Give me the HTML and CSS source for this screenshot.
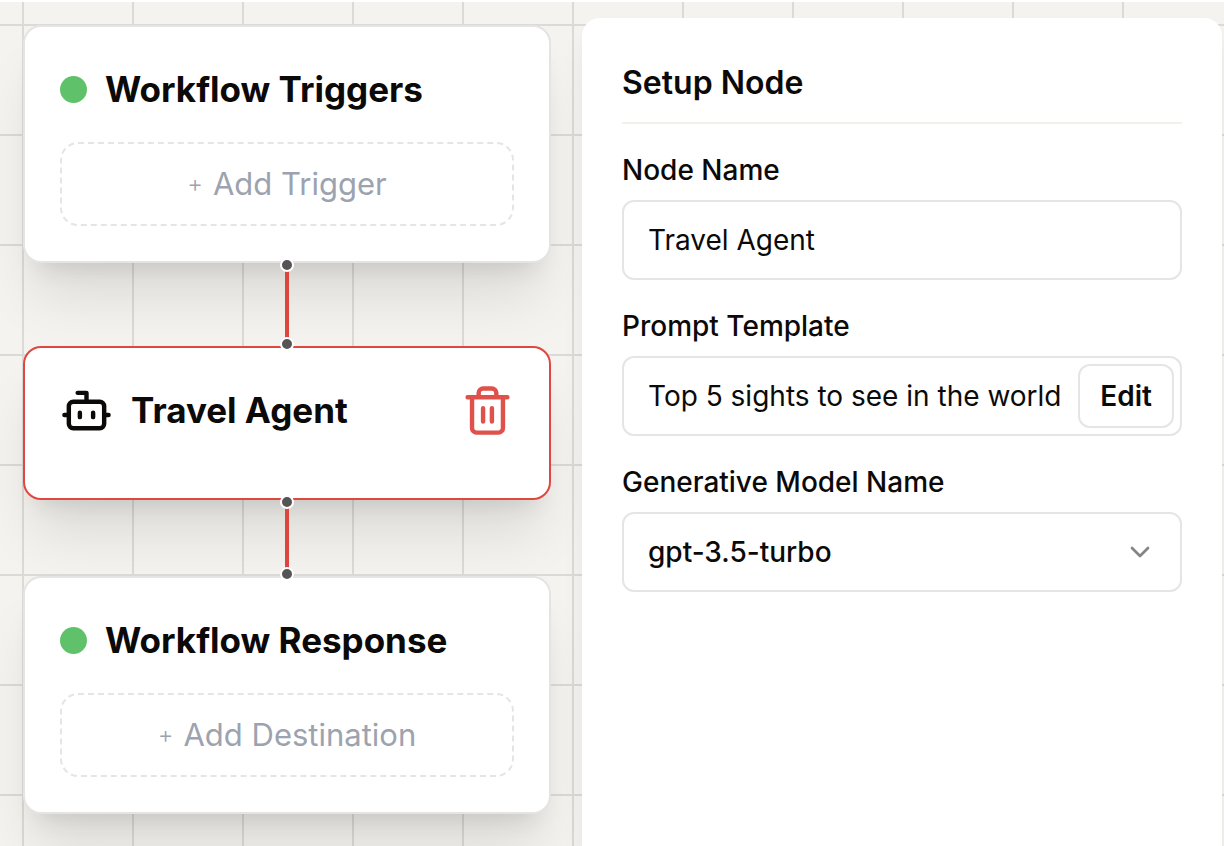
FILE: index.html
```
<!DOCTYPE html>
<html lang="en">
<head>
<meta charset="utf-8">
<title>Workflow editor</title>
<link rel="stylesheet" href="styles.css">
</head>
<body>
<main class="editor">
  <section class="flow" aria-label="Workflow">
    <article class="node">
      <h2 class="node-title"><span class="status"></span>Workflow Triggers</h2>
      <button class="add" type="button"><span class="plus">+</span>Add Trigger</button>
    </article>
    <div class="edge edge-long">
      <span class="handle handle-top"></span>
      <span class="handle handle-bottom"></span>
    </div>
    <article class="node node-selected">
      <div class="node-head">
        <h2 class="node-title">
          <svg class="icon" viewBox="0 0 24 24" aria-hidden="true"><path d="M12 8V4H8"/><rect x="4" y="8" width="16" height="12" rx="2"/><path d="M2 14h2M20 14h2M15 13v2M9 13v2"/></svg>
          Travel Agent
        </h2>
        <button class="delete" type="button" aria-label="Delete node">
          <svg class="icon" viewBox="0 0 24 24" aria-hidden="true"><path d="M3 6h18M19 6v14c0 1-1 2-2 2H7c-1 0-2-1-2-2V6M8 6V4c0-1 1-2 2-2h4c1 0 2 1 2 2v2M10 11v6M14 11v6"/></svg>
        </button>
      </div>
    </article>
    <div class="edge edge-short">
      <span class="handle handle-top"></span>
      <span class="handle handle-bottom"></span>
    </div>
    <article class="node">
      <h2 class="node-title"><span class="status"></span>Workflow Response</h2>
      <button class="add" type="button"><span class="plus">+</span>Add Destination</button>
    </article>
  </section>
  <aside class="panel">
    <h1 class="panel-title">Setup Node</h1>
    <form class="fields">
      <div class="field">
        <label for="name">Node Name</label>
        <input class="control" id="name" type="text" value="Travel Agent">
      </div>
      <div class="field">
        <label for="prompt">Prompt Template</label>
        <div class="control control-group">
          <input class="bare" id="prompt" type="text" value="Top 5 sights to see in the world">
          <button class="edit" type="button">Edit</button>
        </div>
      </div>
      <div class="field">
        <label for="model">Generative Model Name</label>
        <div class="control select-box">
          <select class="bare select" id="model"><option>gpt-3.5-turbo</option></select>
          <svg class="chevron" viewBox="0 0 24 24" aria-hidden="true"><path d="M6 9l6 6 6-6"/></svg>
        </div>
      </div>
    </form>
  </aside>
</main>
</body>
</html>
```
FILE: styles.css
```
* {
  box-sizing: border-box;
}

body {
  margin: 0;
  font-family: Inter, "Liberation Sans", sans-serif;
  color: #0c0a09;
}

h1,
h2 {
  margin: 0;
}

button,
input,
select {
  font: inherit;
  color: inherit;
}

.editor {
  display: flex;
  height: 100vh;
  overflow: hidden;
  border-top: 2px solid #fff;
  background-color: #f4f3ef;
  background-image:
    linear-gradient(#dcdad6 2px, transparent 2px),
    linear-gradient(90deg, #dcdad6 2px, transparent 2px);
  background-size: 110px 110px;
  background-position: 22px 22px;
}

.flow {
  flex: 0 0 582px;
  padding: 23px 31px 0 23px;
}

.node {
  padding: 35px;
  border: 2px solid #e5e4e2;
  border-radius: 18px;
  background: #fff;
  box-shadow:
    0 44px 55px -11px rgb(0 0 0 / 10%),
    0 18px 22px -13px rgb(0 0 0 / 10%);
}

.node-selected {
  padding-bottom: 60px;
  border-color: #de4841;
}

.node-head {
  display: flex;
  align-items: center;
  justify-content: space-between;
}

.node-title {
  display: flex;
  align-items: center;
  gap: 18px;
  font-size: 35px;
  line-height: 55px;
  font-weight: 700;
}

.status {
  width: 27px;
  height: 27px;
  border-radius: 50%;
  background: #5fc26a;
}

.icon {
  display: block;
  width: 53px;
  height: 53px;
  fill: none;
  stroke: currentColor;
  stroke-width: 2;
  stroke-linecap: round;
  stroke-linejoin: round;
}

.delete {
  padding: 0;
  border: 0;
  background: none;
  color: #df514b;
}

.add {
  display: flex;
  align-items: center;
  justify-content: center;
  gap: 10px;
  width: 100%;
  height: 84px;
  margin-top: 25px;
  padding: 0 0 2px;
  border: 2px dashed #e5e5e5;
  border-radius: 18px;
  background: none;
  color: #9ca3af;
  font-size: 31px;
}

.plus {
  font-size: 24px;
  font-weight: 300;
}

.edge {
  position: relative;
  z-index: 1;
  width: 4px;
  margin: 0 auto;
  background: #dc463f;
}

.edge-long {
  height: 83px;
}

.edge-short {
  height: 76px;
}

.handle {
  position: absolute;
  left: -5px;
  width: 14px;
  height: 14px;
  border: 2px solid #fff;
  border-radius: 50%;
  background: #555;
}

.handle-top {
  top: -5px;
}

.handle-bottom {
  bottom: -5px;
}

.panel {
  flex: 1;
  min-width: 0;
  margin: 16px 2px 0 0;
  padding: 40px;
  border-radius: 18px 18px 0 0;
  background: #fff;
  box-shadow: 0 18px 22px rgb(0 0 0 / 6%);
}

.panel-title {
  padding-bottom: 14px;
  border-bottom: 2px solid #f2f0eb;
  font-size: 32px;
  line-height: 50px;
  font-weight: 600;
}

.fields,
.field {
  display: flex;
  flex-direction: column;
}

.fields {
  gap: 32px;
  padding-top: 32px;
}

.field {
  gap: 16px;
}

label {
  font-size: 28px;
  line-height: 28px;
  font-weight: 500;
}

.control {
  width: 100%;
  height: 80px;
  padding: 0 24px;
  border: 2px solid #e5e5e5;
  border-radius: 12px;
  background: #fff;
  font-size: 28px;
}

.control-group {
  display: flex;
  align-items: center;
  gap: 16px;
  padding-right: 6px;
}

.bare {
  flex: 1;
  min-width: 0;
  padding: 0;
  border: 0;
  background: none;
}

.edit {
  height: 64px;
  padding: 0 20px;
  border: 2px solid #e5e5e5;
  border-radius: 12px;
  background: #fff;
  font-weight: 600;
}

.select-box {
  display: flex;
  align-items: center;
}

.select {
  appearance: none;
  font-weight: 500;
}

.chevron {
  width: 32px;
  height: 32px;
  fill: none;
  stroke: #858484;
  stroke-width: 2;
  stroke-linecap: round;
  stroke-linejoin: round;
  pointer-events: none;
}
```
